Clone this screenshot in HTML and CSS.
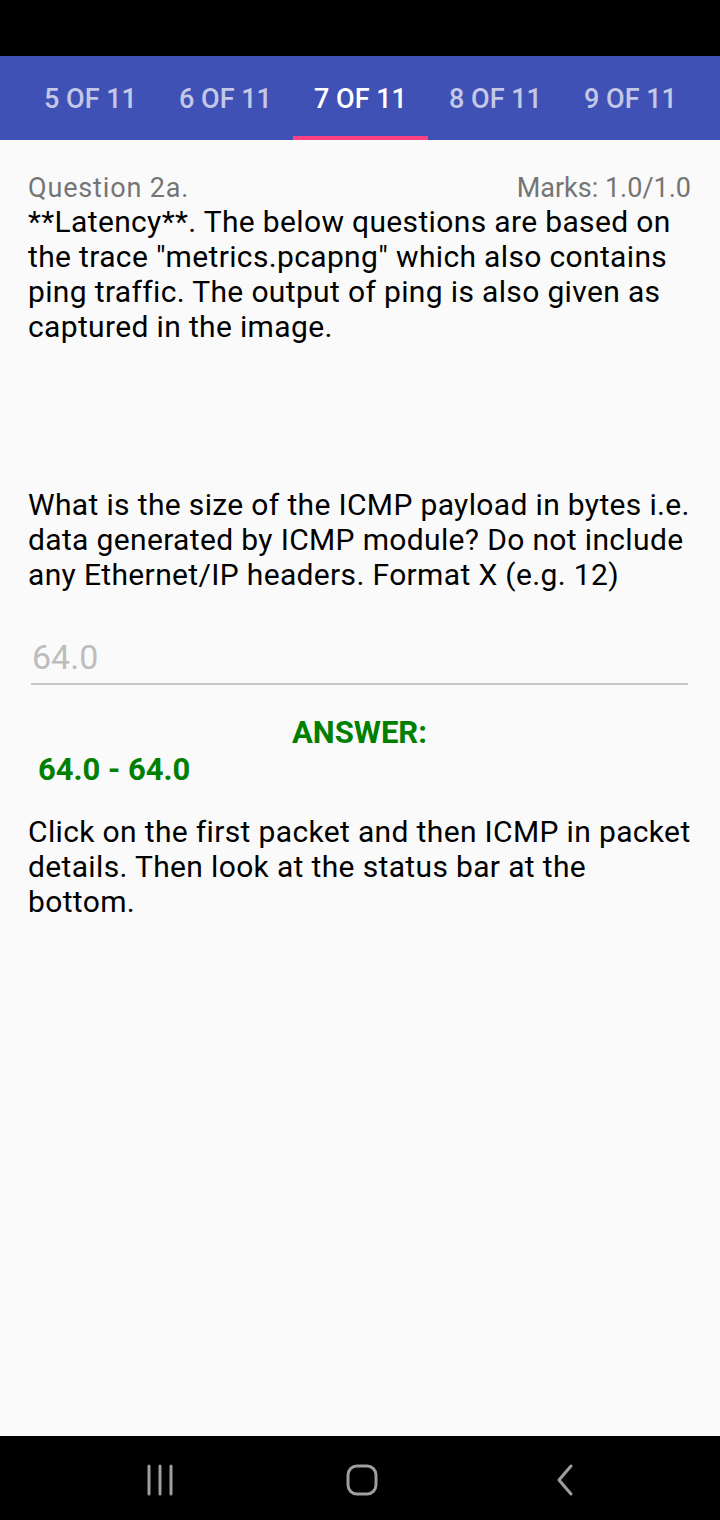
FILE: index.html
```html
<!DOCTYPE html>
<html lang="en">
<head>
<meta charset="utf-8">
<title>Question 7 of 11</title>
<link rel="stylesheet" href="styles.css">
</head>
<body>
<div class="screen">
  <div class="status-bar"></div>
  <nav class="tabs">
    <div class="tab">5 OF 11</div>
    <div class="tab">6 OF 11</div>
    <div class="tab active">7 OF 11</div>
    <div class="tab">8 OF 11</div>
    <div class="tab">9 OF 11</div>
  </nav>
  <main class="content">
    <div class="q-head">
      <span class="q-num">Question 2a.</span>
      <span class="q-marks">Marks: 1.0/1.0</span>
    </div>
    <p class="text">**Latency**. The below questions are based on the trace "metrics.pcapng" which also contains ping traffic. The output of ping is also given as captured in the image.</p>
    <div class="image-space"></div>
    <p class="text">What is the size of the ICMP payload in bytes i.e. data generated by ICMP module? Do not include any Ethernet/IP headers. Format X (e.g. 12)</p>
    <div class="input-field">64.0</div>
    <div class="answer-label">ANSWER:</div>
    <div class="answer-value">64.0 - 64.0</div>
    <p class="text feedback">Click on the first packet and then ICMP in packet details. Then look at the status bar at the bottom.</p>
  </main>
  <footer class="nav-bar">
    <svg class="nav-icon" width="40" height="40" viewBox="0 0 40 40"><g stroke="#9e9e9e" stroke-width="3" stroke-linecap="round"><line x1="8" y1="6" x2="8" y2="34"/><line x1="19" y1="6" x2="19" y2="34"/><line x1="30" y1="6" x2="30" y2="34"/></g></svg>
    <svg class="nav-icon" width="40" height="40" viewBox="0 0 40 40"><rect x="6" y="6" width="28" height="28" rx="9" fill="none" stroke="#9e9e9e" stroke-width="3"/></svg>
    <svg class="nav-icon" width="40" height="40" viewBox="0 0 40 40"><polyline points="26,6 14,20 26,34" fill="none" stroke="#9e9e9e" stroke-width="3" stroke-linecap="round" stroke-linejoin="round"/></svg>
  </footer>
</div>
</body>
</html>
```

FILE: styles.css
```css
* { box-sizing: border-box; }
html, body { margin: 0; padding: 0; }
body {
  font-family: Roboto, "Noto Sans", sans-serif;
  background: #fafafa;
}
.screen {
  width: 720px;
  height: 1520px;
  display: flex;
  flex-direction: column;
  background: #fafafa;
}
.status-bar {
  height: 56px;
  background: #000;
  flex: none;
}
.tabs {
  height: 84px;
  flex: none;
  background: #3f51b5;
  display: flex;
  padding-left: 23px;
}
.tab {
  width: 135px;
  display: flex;
  align-items: center;
  justify-content: center;
  padding-top: 2px;
  color: rgba(255,255,255,0.7);
  font-size: 27px;
  font-weight: 500;
  position: relative;
}
.tab.active { color: #fff; }
.tab.active::after {
  content: "";
  position: absolute;
  left: 0; right: 0; bottom: 0;
  height: 4px;
  background: #ff4081;
}
.content {
  flex: 1;
  padding: 31px 29px 0 28px;
}
.q-head {
  display: flex;
  justify-content: space-between;
  align-items: center;
  height: 33px;
  font-size: 27px;
  color: #757575;
}
.q-num { letter-spacing: 0.85px; }
.text {
  margin: 0;
  font-size: 30px;
  line-height: 35px;
  letter-spacing: 0.35px;
  color: #000;
}
.image-space { height: 143px; }
.input-field {
  margin: 45px 3px 0 3px;
  padding: 0 0 6px 1px;
  font-size: 34px;
  line-height: 40px;
  color: #bdbdbd;
  border-bottom: 2px solid #c6c6c6;
}
.answer-label {
  margin-top: 30px;
  text-align: center;
  color: #008000;
  font-weight: 700;
  font-size: 31px;
  line-height: 36px;
}
.answer-value {
  margin-top: 1px;
  padding-left: 10px;
  color: #008000;
  font-weight: 700;
  font-size: 31px;
  line-height: 36px;
}
.feedback { margin-top: 26px; }
.nav-bar {
  height: 84px;
  flex: none;
  background: #000;
  display: flex;
  align-items: center;
  padding-top: 4px;
}
.nav-bar .nav-icon:nth-child(1) { margin-left: 141px; }
.nav-bar .nav-icon:nth-child(2) { margin-left: 161px; }
.nav-bar .nav-icon:nth-child(3) { margin-left: 163px; }
```
